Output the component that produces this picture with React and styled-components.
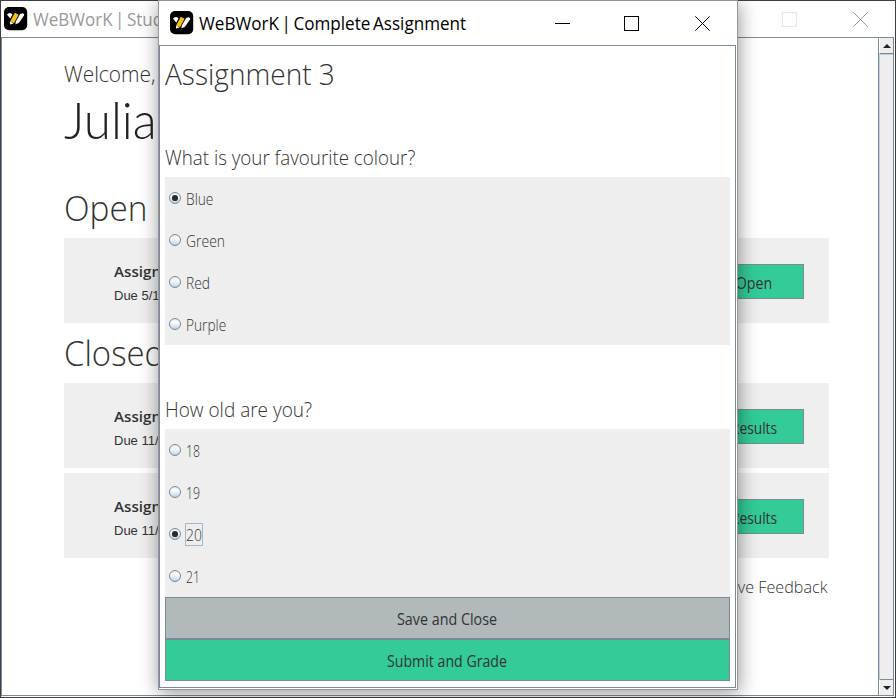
import React from 'react';
import styled, { createGlobalStyle } from 'styled-components';

const LINE = '#7a8a99';
const GREEN = '#33cc99';

const Global = createGlobalStyle`
  * { box-sizing: border-box; }
  body { margin: 0; background: #fff; font-family: "Open Sans", "Noto Sans", sans-serif; color: #333; }
`;

const Desktop = styled.div`
  position: relative;
  width: 896px;
  height: 698px;
  overflow: hidden;
`;

const MainWindow = styled.div`
  width: 896px;
  height: 698px;
  display: flex;
  flex-direction: column;
  background: #fff;
  border: 1px solid #3f4043;
`;

const TitleBar = styled.div`
  height: ${p => p.$height}px;
  flex: none;
  display: flex;
  align-items: center;
  padding: 0 ${p => p.$right}px 0 ${p => p.$left}px;
`;

const TitleIcon = styled.svg`
  width: 24px;
  height: 24px;
  flex: none;
  margin-top: -1px;
`;

const Text = styled.span`
  display: block;
  white-space: nowrap;
  transform: scaleX(${p => p.$stretch || 1});
  transform-origin: ${p => p.$origin || 'left'} center;
`;

const Title = styled(Text)`
  margin-left: 5px;
  font-size: 18px;
  line-height: 36px;
  word-spacing: -2px;
  color: ${p => (p.$active ? '#000' : '#999')};
`;

const Controls = styled.div`
  margin-left: auto;
  display: flex;
  gap: ${p => p.$gap}px;
  flex: none;
`;

const ControlIcon = styled.svg`
  width: 15px;
  height: 15px;
  display: block;
  fill: none;
  stroke: ${p => p.$tone || '#000'};
`;

const MinimizeIcon = styled(ControlIcon)`
  margin-right: -2px;
`;

const WindowBody = styled.div`
  flex: 1;
  display: flex;
  min-height: 0;
  border: 1px solid ${LINE};
  margin-right: 1px;
  margin-bottom: 1px;
`;

const Page = styled.main`
  flex: 1;
  padding: 20px 49px 0 62px;
`;

const Welcome = styled(Text)`
  font-size: 22px;
  font-weight: 300;
  line-height: 30px;
`;

const StudentName = styled(Text)`
  font-family: Lato, "Open Sans", sans-serif;
  font-size: 52px;
  font-weight: 300;
  line-height: 62px;
  margin-bottom: 32px;
  color: #222;
`;

const SectionTitle = styled(Text)`
  font-size: 35px;
  font-weight: 300;
  line-height: 52px;
  margin-bottom: 4px;
`;

const CardList = styled.div`
  display: flex;
  flex-direction: column;
  gap: 5px;
  margin-bottom: 4px;
`;

const Card = styled.article`
  height: 85px;
  display: flex;
  align-items: center;
  justify-content: space-between;
  padding: 2px 25px 0 50px;
  background: #efefef;
`;

const CardSummary = styled.div`
  padding-top: 2px;
`;

const CardName = styled(Text)`
  font-size: 15px;
  font-weight: 600;
  line-height: 24px;
`;

const CardDue = styled.div`
  font: 13px/20px "Liberation Sans", Arial, sans-serif;
  padding-top: 3px;
`;

const CardButton = styled.button`
  width: 100px;
  height: 35px;
  padding: 2px 0 0;
  border: 1px solid ${LINE};
  background: ${GREEN};
  color: #333;
  font: 16px "Open Sans", sans-serif;
`;

const Feedback = styled(Text)`
  width: fit-content;
  margin: 16px 2px 0 auto;
  font-size: 17px;
  font-weight: 300;
  line-height: 26px;
`;

const ScrollBar = styled.div`
  width: 15px;
  display: flex;
  flex-direction: column;
  border-left: 1px solid ${LINE};
  background: #eee;
`;

const ScrollButton = styled.div`
  height: 16px;
  display: grid;
  place-items: center;
  border-${p => (p.$down ? 'top' : 'bottom')}: 1px solid ${LINE};
  border-left: 1px solid #fff;
`;

const ScrollTrack = styled.div`
  flex: 1;
  border-left: 1px solid #b8cfe5;
  border-top: 1px solid #b8cfe5;
`;

const Arrow = styled.svg`
  width: 8px;
  height: 4px;
  fill: #222;
`;

const Dialog = styled.section`
  position: absolute;
  left: 158px;
  top: 0;
  width: 580px;
  height: 690px;
  display: flex;
  flex-direction: column;
  background: #fff;
  border: 1px solid #959597;
  box-shadow: 1px 3px 18px rgba(0, 0, 0, 0.42);
`;

const DialogBody = styled.div`
  flex: 1;
  margin: 0 1px 1px 0;
  padding: 0 5px;
  border: 1px solid ${LINE};
`;

const AssignmentTitle = styled(Text)`
  font-size: 30px;
  font-weight: 300;
  line-height: 56px;
  margin-bottom: 35px;
`;

const Question = styled(Text)`
  font-size: 20px;
  font-weight: 300;
  line-height: 38px;
  padding-top: 2px;
`;

const OptionPanel = styled.div`
  margin-bottom: ${p => (p.$last ? 0 : 44)}px;
  background: #eee;
`;

const Option = styled.div`
  height: 42px;
  display: flex;
  align-items: center;
  padding-left: 4px;
`;

const Radio = styled.svg`
  width: 12px;
  height: 12px;
  margin: 0 4px 0 0;
`;

const OptionLabel = styled.div`
  height: 23px;
  margin-top: 1px;
  padding: 0 ${p => (p.$focus ? 0 : 1)}px;
  border: ${p => (p.$focus ? '1px solid #a3b8cc' : '0')};
  width: ${p => (p.$focus ? '18px' : 'auto')};
`;

const OptionText = styled(Text)`
  font-size: 16px;
  font-weight: 300;
  line-height: ${p => (p.$focus ? 23 : 25)}px;
`;

const ActionButton = styled.button`
  display: block;
  width: 100%;
  height: 42px;
  padding: 2px 1px 0 0;
  border: 1px solid ${LINE};
  background: ${p => (p.$primary ? GREEN : '#b1b9bb')};
  color: #333;
  font: 16px "Open Sans", sans-serif;
`;

function Logo() {
  return (
    <TitleIcon viewBox="0 0 24 24">
      <rect x="0" y="0" width="23.2" height="23.2" rx="5" fill="#000" />
      <path d="M3 7.6Q4.3 5.8 6.3 6Q8 6.5 8.4 7.6L6.3 11.6Q4.6 9.9 3 7.6Z" fill="#fff" />
      <path d="M10.8 5.8L14.6 7.8L10 16.2L6.1 14.4Z" fill="#f2c011" />
      <path d="M6.1 14.4L9.6 16.4L6 17.4Z" fill="#fff" />
      <path d="M16 7L18.6 6.2Q20.8 6.6 20 8.4L14.8 16L11.4 17.2L11.8 14.4L15 9Z" fill="#fff" />
    </TitleIcon>
  );
}

function MaximizeIcon({ tone }) {
  return <ControlIcon $tone={tone} viewBox="0 0 15 15"><rect x="0.5" y="0.5" width="14" height="14" /></ControlIcon>;
}

function CloseIcon({ tone }) {
  return <ControlIcon $tone={tone} viewBox="0 0 15 15"><path d="M0.3 0.3L14.7 14.7M14.7 0.3L0.3 14.7" /></ControlIcon>;
}

function RadioMark({ checked, id }) {
  return (
    <Radio viewBox="0 0 12 12">
      <defs>
        <linearGradient id={id} x1="0" y1="0" x2="0" y2="1">
          <stop offset="0" stopColor="#dce8f3" />
          <stop offset="0.35" stopColor="#fff" />
          <stop offset="1" stopColor="#b8cfe5" />
        </linearGradient>
      </defs>
      <circle cx="6" cy="6" r="5.5" fill={`url(#${id})`} stroke={LINE} />
      {checked && <circle cx="6" cy="6" r="3.1" fill="#2b2b2b" />}
    </Radio>
  );
}

function OptionGroup({ name, options, selected, focused, last }) {
  return (
    <OptionPanel $last={last}>
      {options.map(([label, stretch], i) => (
        <Option key={label}>
          <RadioMark id={`${name}${i}`} checked={label === selected} />
          <OptionLabel $focus={label === focused}>
            <OptionText $stretch={stretch} $focus={label === focused}>{label}</OptionText>
          </OptionLabel>
        </Option>
      ))}
    </OptionPanel>
  );
}

function AssignmentCard({ name, due, action, stretch }) {
  return (
    <Card>
      <CardSummary>
        <CardName $stretch={1.01}>{name}</CardName>
        <CardDue>{due}</CardDue>
      </CardSummary>
      <CardButton><Text $stretch={stretch} $origin="center">{action}</Text></CardButton>
    </Card>
  );
}

export default function App() {
  return (
    <Desktop>
      <Global />
      <MainWindow>
        <TitleBar $height={36} $left={3} $right={27}>
          <Logo />
          <Title $stretch={0.945}>WeBWorK | Stud</Title>
          <Controls $gap={56}>
            <MaximizeIcon tone="#e6e6e6" />
            <CloseIcon tone="#999" />
          </Controls>
        </TitleBar>
        <WindowBody>
          <Page>
            <Welcome $stretch={0.95}>Welcome,</Welcome>
            <StudentName $stretch={0.95}>Julia</StudentName>
            <SectionTitle $stretch={0.955}>Open</SectionTitle>
            <CardList>
              <AssignmentCard name="Assign" due="Due 5/1" action="Open" stretch={0.89} />
            </CardList>
            <SectionTitle $stretch={0.94}>Closed</SectionTitle>
            <CardList>
              <AssignmentCard name="Assign" due="Due 11/" action="Results" stretch={0.86} />
              <AssignmentCard name="Assign" due="Due 11/" action="Results" stretch={0.86} />
            </CardList>
            <Feedback $stretch={0.95} $origin="right">Give Feedback</Feedback>
          </Page>
          <ScrollBar>
            <ScrollButton><Arrow viewBox="0 0 8 4"><path d="M4 0L8 4H0Z" /></Arrow></ScrollButton>
            <ScrollTrack />
            <ScrollButton $down><Arrow viewBox="0 0 8 4"><path d="M0 0H8L4 4Z" /></Arrow></ScrollButton>
          </ScrollBar>
        </WindowBody>
      </MainWindow>
      <Dialog>
        <TitleBar $height={44} $left={11} $right={27}>
          <Logo />
          <Title $active $stretch={0.95}>WeBWorK | Complete Assignment</Title>
          <Controls $gap={56}>
            <MinimizeIcon viewBox="0 0 15 15"><path d="M0 7.5H15" /></MinimizeIcon>
            <MaximizeIcon />
            <CloseIcon />
          </Controls>
        </TitleBar>
        <DialogBody>
          <AssignmentTitle $stretch={0.935}>Assignment 3</AssignmentTitle>
          <Question $stretch={0.938}>What is your favourite colour?</Question>
          <OptionGroup name="colour" selected="Blue"
            options={[['Blue', 0.86], ['Green', 0.87], ['Red', 0.86], ['Purple', 0.855]]} />
          <Question $stretch={0.95}>How old are you?</Question>
          <OptionGroup name="age" selected="20" focused="20" last
            options={[['18', 0.77], ['19', 0.77], ['20', 0.87], ['21', 0.77]]} />
          <ActionButton><Text $stretch={0.895} $origin="center">Save and Close</Text></ActionButton>
          <ActionButton $primary><Text $stretch={0.885} $origin="center">Submit and Grade</Text></ActionButton>
        </DialogBody>
      </Dialog>
    </Desktop>
  );
}
